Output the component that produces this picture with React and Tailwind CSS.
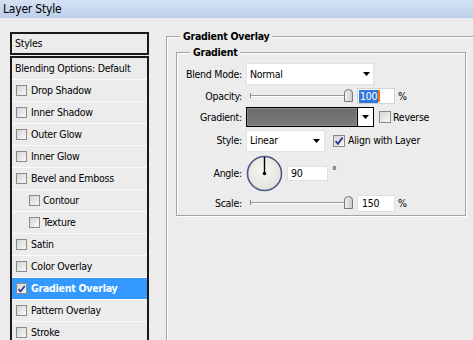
import React from 'react';

function Box({ checked, big }) {
  return (
    <span
      className={
        big
          ? 'flex items-center justify-center w-[12px] h-[12px] shrink-0 border border-[#8a8a8a] bg-gradient-to-br from-[#d4d4d4] to-[#fafafa]'
          : 'flex items-center justify-center w-[11px] h-[11px] shrink-0 border border-[#8a8a8a] bg-gradient-to-br from-[#d4d4d4] to-[#fafafa]'
      }
    >
      {checked && (
        <svg width="10" height="10" viewBox="0 0 10 10">
          <path d="M1.6 5.2 L3.9 7.8 L8.6 1.6" fill="none" stroke="#2b3a9a" strokeWidth="1.9" />
        </svg>
      )}
    </span>
  );
}

function Arrow() {
  return (
    <svg width="7" height="4" viewBox="0 0 7 4">
      <path d="M0 0 H7 L3.5 4 Z" fill="#000" />
    </svg>
  );
}

function Slider() {
  return (
    <svg width="110" height="16" viewBox="0 0 110 16">
      <line x1="4" y1="7.5" x2="104" y2="7.5" stroke="#9c9c9c" />
      <line x1="4" y1="8.5" x2="104" y2="8.5" stroke="#ffffff" />
      <line x1="4.5" y1="5" x2="4.5" y2="10" stroke="#8a8a8a" />
      <defs>
        <linearGradient id="th" x1="0" y1="0" x2="1" y2="0">
          <stop offset="0" stopColor="#f4f4f4" />
          <stop offset="1" stopColor="#c8c8c8" />
        </linearGradient>
      </defs>
      <path
        d="M98.5 13.5 V5 Q98.5 1.5 102.5 1.5 Q106.5 1.5 106.5 5 V13.5 Z"
        fill="url(#th)"
        stroke="#7a7a7a"
      />
    </svg>
  );
}

function Dial() {
  return (
    <svg width="37" height="37" viewBox="0 0 37 37">
      <defs>
        <radialGradient id="dg" cx="0.45" cy="0.4" r="0.6">
          <stop offset="0" stopColor="#f6f5f1" />
          <stop offset="1" stopColor="#e4e2dc" />
        </radialGradient>
      </defs>
      <circle cx="18.5" cy="18.5" r="17" fill="url(#dg)" stroke="#4a5a84" strokeWidth="1.6" />
      <line x1="18.5" y1="18.5" x2="18.5" y2="2" stroke="#000" strokeWidth="1.4" />
      <circle cx="18.5" cy="18.5" r="1.7" fill="#000" />
    </svg>
  );
}

const rows = [
  { label: 'Drop Shadow' },
  { label: 'Inner Shadow' },
  { label: 'Outer Glow' },
  { label: 'Inner Glow' },
  { label: 'Bevel and Emboss' },
  { label: 'Contour', indent: true },
  { label: 'Texture', indent: true },
  { label: 'Satin' },
  { label: 'Color Overlay' },
  { label: 'Gradient Overlay', selected: true },
  { label: 'Pattern Overlay' },
  { label: 'Stroke' },
];

function Label({ children }) {
  return <div className="w-[65px] shrink-0 text-right">{children}</div>;
}

export default function App() {
  return (
    <div className="w-[473px] h-[340px] overflow-hidden bg-[#ececec] text-black text-[10.5px] tracking-[-0.25px] leading-[13px] font-['DejaVu_Sans_Condensed','Liberation_Sans',sans-serif]">
      <div className="h-[18px] bg-gradient-to-b from-[#d4e2f4] to-[#bccfe9] pl-[3px] flex items-center text-[12px] tracking-[-0.2px] leading-[16px]">
        Layer Style
      </div>
      <div className="flex">
        {/* Left column */}
        <div className="ml-[10px] mt-[14px] w-[139px] shrink-0">
          <div className="h-[23px] border-2 border-[#1a1a1a] flex items-center pl-[3px]">Styles</div>
          <div className="mt-[1px] border-2 border-b-0 border-[#1a1a1a]">
            <div className="h-[22px] border-b border-[#fbfbfb] flex items-center pl-[3px]">
              Blending Options: Default
            </div>
            {rows.map((r) =>
              r.selected ? (
                <div
                  key={r.label}
                  className="h-[22px] border-b border-[#fbfbfb] bg-[#3399ff] text-white font-bold flex items-center pl-[4px] gap-[4px]"
                >
                  <Box checked />
                  <span>{r.label}</span>
                </div>
              ) : (
                <div
                  key={r.label}
                  className={
                    r.indent
                      ? 'h-[22px] border-b border-[#fbfbfb] flex items-center pl-[17px] gap-[3px]'
                      : 'h-[22px] border-b border-[#fbfbfb] flex items-center pl-[4px] gap-[4px]'
                  }
                >
                  <Box />
                  <span>{r.label}</span>
                </div>
              )
            )}
          </div>
        </div>

        {/* Right column */}
        <fieldset className="ml-[17px] mt-[12px] w-[330px] h-[360px] shrink-0 border border-[#a3a3a3] shadow-[inset_1px_1px_0_#ffffff]">
          <legend className="ml-[13px] px-[3px] font-bold bg-[#ececec]">Gradient Overlay</legend>
          <fieldset className="ml-[9px] mt-[3px] w-[290px] border border-[#a3a3a3] shadow-[inset_1px_1px_0_#ffffff,1px_1px_0_#ffffff] pb-[2px]">
            <legend className="ml-[13px] px-[3px] font-bold bg-[#ececec]">Gradient</legend>
            <div className="pt-[4px] flex flex-col">
              {/* Blend Mode */}
              <div className="h-[23px] flex items-start">
                <Label>
                  <div className="mt-[5px]">Blend Mode:</div>
                </Label>
                <div className="ml-[4px] w-[128px] h-[22px] bg-white border border-[#e2e2e2] flex items-center justify-between pl-[3px] pr-[3px]">
                  <span>Normal</span>
                  <Arrow />
                </div>
              </div>
              {/* Opacity */}
              <div className="h-[20px] flex items-center">
                <Label>Opacity:</Label>
                <div className="ml-[4px] flex items-center">
                  <Slider />
                </div>
                <div className="ml-[1px] w-[38px] h-[16px] bg-white border border-[#d2d2d2] flex items-center pl-[1px]">
                  <span className="bg-[#3178dc] text-white px-[1px]">100</span>
                  <span className="w-[2px] h-[12px] bg-[#f07800]" />
                </div>
                <span className="ml-[3px]">%</span>
              </div>
              {/* Gradient */}
              <div className="h-[22px] flex items-center">
                <Label>Gradient:</Label>
                <div className="ml-[4px] w-[128px] h-[20px] border border-black flex">
                  <div className="flex-1 bg-gradient-to-b from-[#6c6c6c] to-[#7a7a7a] border border-[#8c8c8c]" />
                  <div className="w-[16px] border-l border-black bg-white flex items-center justify-center">
                    <Arrow />
                  </div>
                </div>
                <div className="ml-[5px] flex items-center gap-[2px]">
                  <Box big />
                  <span>Reverse</span>
                </div>
              </div>
              {/* Style */}
              <div className="h-[25px] flex items-center">
                <Label>Style:</Label>
                <div className="ml-[4px] w-[79px] h-[22px] bg-white border border-[#e2e2e2] flex items-center justify-between pl-[3px] pr-[4px]">
                  <span>Linear</span>
                  <Arrow />
                </div>
                <div className="ml-[8px] flex items-center gap-[3px]">
                  <Box big checked />
                  <span>Align with Layer</span>
                </div>
              </div>
              {/* Angle */}
              <div className="h-[40px] flex items-center">
                <Label>Angle:</Label>
                <div className="ml-[4px] flex">
                  <Dial />
                </div>
                <div className="ml-[4px] w-[41px] h-[15px] bg-white border border-[#e0e0e0] flex items-center pl-[3px]">
                  90
                </div>
                <span className="ml-[4px] self-start mt-[11px]">°</span>
              </div>
              {/* Scale */}
              <div className="h-[20px] flex items-center">
                <Label>Scale:</Label>
                <div className="ml-[4px] flex items-center">
                  <Slider />
                </div>
                <div className="ml-[1px] w-[38px] h-[17px] bg-white border border-[#e0e0e0] flex items-center pl-[4px]">
                  150
                </div>
                <span className="ml-[3px]">%</span>
              </div>
            </div>
          </fieldset>
        </fieldset>
      </div>
    </div>
  );
}
